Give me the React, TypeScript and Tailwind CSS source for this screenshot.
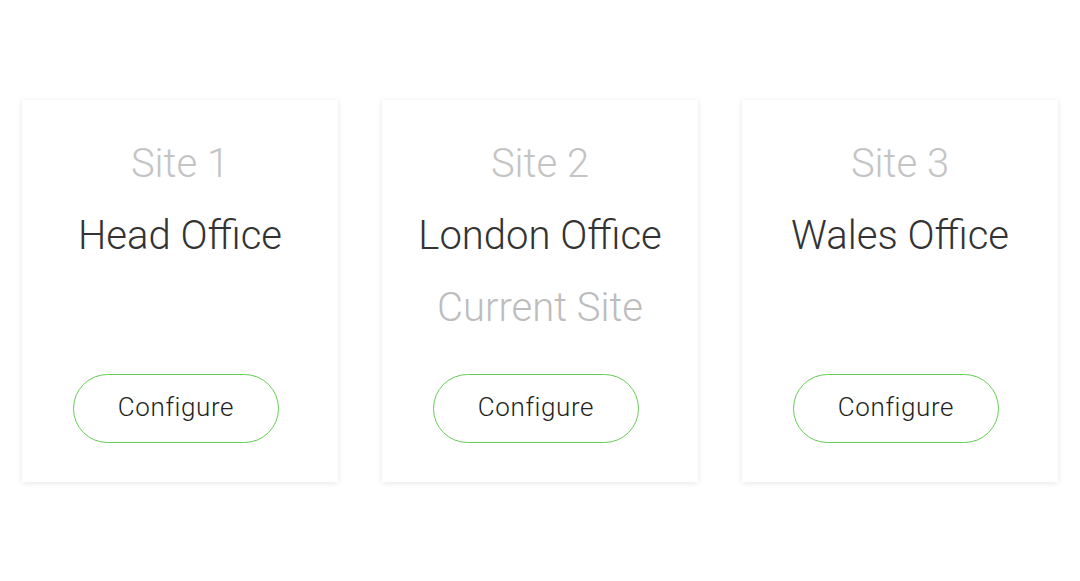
const sites = [
  { label: "Site 1", name: "Head Office", current: false },
  { label: "Site 2", name: "London Office", current: true },
  { label: "Site 3", name: "Wales Office", current: false },
];

const SiteCard = ({ label, name, current }: { label: string; name: string; current: boolean }) => {
  return (
    <div className="flex h-[382px] flex-col items-center bg-white pt-[40px] shadow-[0_1px_6px_rgba(0,0,0,0.10)]">
      <div className="text-[40px] font-light leading-[48px] text-[#c4c4c4]">{label}</div>
      <div className="mt-[24px] text-[40px] font-light leading-[48px] text-[#333333]">{name}</div>
      {current && (
        <div className="mt-[24px] text-[40px] font-light leading-[48px] text-[#bdbdbd]">Current Site</div>
      )}
      {/* button sits a few px left of centre in the design */}
      <button className="mt-auto mb-[39px] mr-[8px] h-[69px] w-[206px] rounded-full border border-[#66cc55] bg-white pb-[2px] text-[26px] font-light tracking-[0.6px] text-[#1f1f1f]">
        Configure
      </button>
    </div>
  );
};

export default function App() {
  return (
    <div className="min-h-[581px] w-full bg-white font-['Roboto',sans-serif]">
      <div className="grid grid-cols-3 gap-[44px] px-[22px] pt-[100px]">
        {sites.map((s) => (
          <SiteCard key={s.label} {...s} />
        ))}
      </div>
    </div>
  );
}
